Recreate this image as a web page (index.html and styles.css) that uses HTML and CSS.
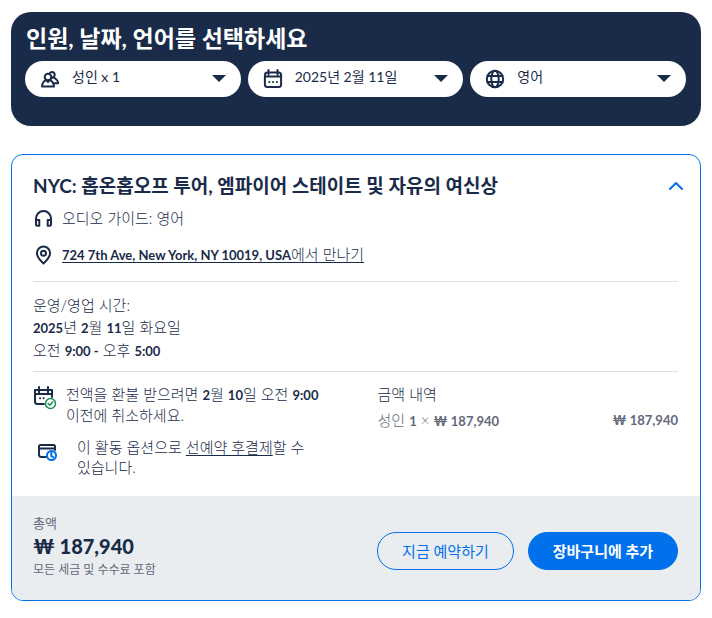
FILE: index.html
```html
<!DOCTYPE html>
<html lang="ko">
<head>
<meta charset="utf-8">
<meta name="viewport" content="width=device-width, initial-scale=1">
<title>예약 옵션</title>
<link rel="stylesheet" href="styles.css">
</head>
<body>
<main class="page">
  <section class="filters">
    <h2 class="filters-title">인원, 날짜, 언어를 선택하세요</h2>
    <form class="filters-row">
      <label class="pill">
        <svg class="icon" viewBox="0 0 20 20" aria-hidden="true"><circle cx="8" cy="8" r="3.3"/><path d="M2 17.5c0-3.2 1.8-5.2 3.9-6.8L8 13l2.100-2.300c2.100 1.600 3.900 3.600 3.900 6.800z"/><path d="M9.800 4.200a2.700 2.700 0 1 1 3.300 4l1.500.8c2.200 1.400 3.400 3 3.600 5.200h-4.600M10.800 9.600l2.300-1.400"/></svg>
        <select aria-label="인원"><option>성인 x 1</option></select>
        <svg class="caret" viewBox="0 0 14 8" aria-hidden="true"><path d="M0 0h14L7 7z"/></svg>
      </label>
      <label class="pill">
        <svg class="icon" viewBox="0 0 20 20" aria-hidden="true"><rect x="1.900" y="3.500" width="16.200" height="14.500" rx="2.500"/><path d="M2 7.500h16M5.500 1v4.500M14.500 1v4.500"/><path d="M6.200 13h.1M10 13h.1M13.800 13h.1"/></svg>
        <select aria-label="날짜"><option>2025년 2월 11일</option></select>
        <svg class="caret" viewBox="0 0 14 8" aria-hidden="true"><path d="M0 0h14L7 7z"/></svg>
      </label>
      <label class="pill">
        <svg class="icon" viewBox="0 0 20 20" aria-hidden="true"><circle cx="10" cy="10" r="8.200"/><ellipse cx="10" cy="10" rx="3.700" ry="8.200"/><path d="M2.500 7h15M2.500 13h15"/></svg>
        <select aria-label="언어"><option>영어</option></select>
        <svg class="caret" viewBox="0 0 14 8" aria-hidden="true"><path d="M0 0h14L7 7z"/></svg>
      </label>
    </form>
  </section>

  <article class="card">
    <div class="card-body">
      <header class="card-head">
        <h3 class="card-title">NYC: 홉온홉오프 투어, 엠파이어 스테이트 및 자유의 여신상</h3>
        <button class="toggle" type="button" aria-label="접기"><svg viewBox="0 0 16 10" aria-hidden="true"><path d="M2 8l6-6 6 6"/></svg></button>
      </header>
      <p class="fact">
        <svg class="icon" viewBox="0 0 20 20" aria-hidden="true"><path d="M3 16v-5.500a7.500 7.500 0 0 1 15 0V16"/><path d="M3 12h3.300v5.800H4.500A1.500 1.500 0 0 1 3 16.300zM18 12h-3.300v5.800h1.800a1.500 1.500 0 0 0 1.500-1.500z"/></svg>
        <span>오디오 가이드: 영어</span>
      </p>
      <p class="fact fact-place">
        <svg class="icon" viewBox="0 0 20 20" aria-hidden="true"><path d="M10.500 18.500c-3.600-3.400-6.600-6.500-6.600-10.300a6.600 6.600 0 0 1 13.200 0c0 3.800-3 6.900-6.600 10.300z"/><circle cx="10.500" cy="8.300" r="2.500"/></svg>
        <a href="#"><span class="latin">724 7th Ave, New York, NY 10019, USA</span>에서 만나기</a>
      </p>
      <div class="hours">
        <p>운영/영업 시간:</p>
        <p><span class="latin">2025</span>년 <span class="latin">2</span>월 <span class="latin">11</span>일 화요일</p>
        <p>오전 <span class="latin">9:00 -</span> 오후 <span class="latin">5:00</span></p>
      </div>
      <div class="details">
        <div class="policies">
          <div class="policy">
            <svg class="icon-policy" viewBox="0 0 24 24" aria-hidden="true"><path d="M11 18H4.500A2.500 2.500 0 0 1 2 15.500V4h17v7M2 8h17M6 1v5.500M15 1v5.500"/><path d="M7 12.300h.1M10.500 12.300h.1"/><g class="green"><circle cx="17.500" cy="17.500" r="5"/><path d="M15.200 17.600l1.600 1.600 3-3.200"/></g></svg>
            <p>전액을 환불 받으려면 <span class="latin">2</span>월 <span class="latin">10</span>일 오전 <span class="latin">9:00</span> 이전에 취소하세요.</p>
          </div>
          <div class="policy policy-later">
            <svg class="icon-policy" viewBox="0 0 24 24" aria-hidden="true"><path d="M10 18H5.500A2.500 2.500 0 0 1 3 15.500v-8A1.500 1.500 0 0 1 4.500 6h13A1.500 1.500 0 0 1 19 7.500V11M3 9.500h16"/><g class="blue"><circle cx="15.500" cy="16.500" r="4.500"/><path d="M15.300 13.800v3l1.900 1.300"/></g></svg>
            <p>이 활동 옵션으로 <a href="#">선예약 후결제</a>할 수 있습니다.</p>
          </div>
        </div>
        <div class="prices">
          <h4>금액 내역</h4>
          <p class="price-row"><span>성인 <span class="latin">1</span> × <span class="latin">₩ 187,940</span></span><span class="latin">₩ 187,940</span></p>
        </div>
      </div>
    </div>
    <footer class="card-foot">
      <div class="total">
        <p class="total-label">총액</p>
        <p class="total-price">₩ 187,940</p>
        <p class="total-note">모든 세금 및 수수료 포함</p>
      </div>
      <div class="actions">
        <button class="btn btn-outline" type="button">지금 예약하기</button>
        <button class="btn btn-solid" type="button">장바구니에 추가</button>
      </div>
    </footer>
  </article>
</main>
</body>
</html>
```
FILE: styles.css
```css
* { box-sizing: border-box; }

body, h2, h3, h4, p { margin: 0; }

body {
  background: #fff;
  color: #1a2b49;
  font: 400 15px/20px Lato, "Noto Sans CJK KR", sans-serif;
  word-break: keep-all;
}

button, select { font: inherit; color: inherit; }
a { color: inherit; text-underline-offset: 2px; }

svg { flex: none; fill: none; stroke: currentColor; stroke-width: 2; stroke-linecap: round; stroke-linejoin: round; }

.latin { font-size: 13px; font-weight: 700; }

.page {
  display: flex;
  flex-direction: column;
  gap: 28px;
  padding: 12px 11px;
}

.filters {
  padding: 12px 15px 29px 14px;
  border-radius: 20px;
  background: #1a2b49;
}

.filters-title {
  padding-left: 1px;
  color: #fff;
  font-size: 23px;
  line-height: 28px;
}

.filters-row {
  display: grid;
  grid-template-columns: repeat(3, 1fr);
  gap: 7px;
  margin-top: 9px;
}

.pill {
  display: flex;
  align-items: center;
  height: 36px;
  padding: 0 15px;
  border-radius: 18px;
  background: #fff;
}

.icon { width: 20px; height: 20px; }

.pill select {
  flex: 1;
  min-width: 0;
  margin: 0 0 4px 12px;
  padding: 0;
  border: 0;
  appearance: none;
  background: none;
  font-size: 14px;
}

.caret { width: 14px; height: 8px; fill: currentColor; stroke: none; }

.card {
  overflow: hidden;
  border: 1px solid #0071eb;
  border-radius: 12px;
}

.card-body { padding: 17px 22px 19px 21px; font-weight: 300; }

.card-head {
  display: flex;
  align-items: center;
  justify-content: space-between;
}

.card-title { font-size: 19px; line-height: 28px; }

.toggle {
  display: flex;
  margin-right: -6px;
  padding: 0;
  border: 0;
  background: none;
  color: #0071eb;
}

.toggle svg { width: 16px; height: 10px; }

.fact {
  display: flex;
  align-items: center;
  gap: 9px;
  margin-top: 8px;
}

.fact-place { margin-top: 16px; }

.hours {
  margin-top: 16px;
  padding: 12px 0 9px;
  border: solid #dcdfe4;
  border-width: 1px 0;
  line-height: 22px;
}

.details {
  display: grid;
  grid-template-columns: 1fr 1fr;
  gap: 44px;
  padding-top: 12px;
}

.policies { display: flex; flex-direction: column; gap: 12px; }

.policy { display: flex; gap: 9px; }
.policy-later { padding-left: 3px; gap: 17px; }
.icon-policy { width: 24px; height: 24px; margin-top: 2px; }

.green { stroke: #1b8f5a; stroke-width: 1.5; }
.blue { stroke: #0071eb; }

.prices h4 { font-size: 15px; font-weight: 300; line-height: 20px; }

.price-row {
  display: flex;
  justify-content: space-between;
  margin-top: 6px;
  color: #63687a;
}

.card-foot {
  display: flex;
  align-items: center;
  justify-content: space-between;
  padding: 17px 22px 20px 21px;
  background: #e9edf0;
}

.total-label, .total-note { color: #63687a; }
.total-label { font-size: 13px; }
.total-price { font-size: 20px; font-weight: 900; line-height: 26px; }
.total-note { font-size: 12px; line-height: 21px; }

.actions { display: flex; gap: 14px; margin-top: 8px; }

.btn {
  height: 38px;
  padding: 0 24px;
  border: 1px solid #0071eb;
  border-radius: 19px;
  font-size: 15px;
}

.btn-outline { background: none; color: #0071eb; }
.btn-solid { background: #0071eb; color: #fff; font-weight: 700; }
```
